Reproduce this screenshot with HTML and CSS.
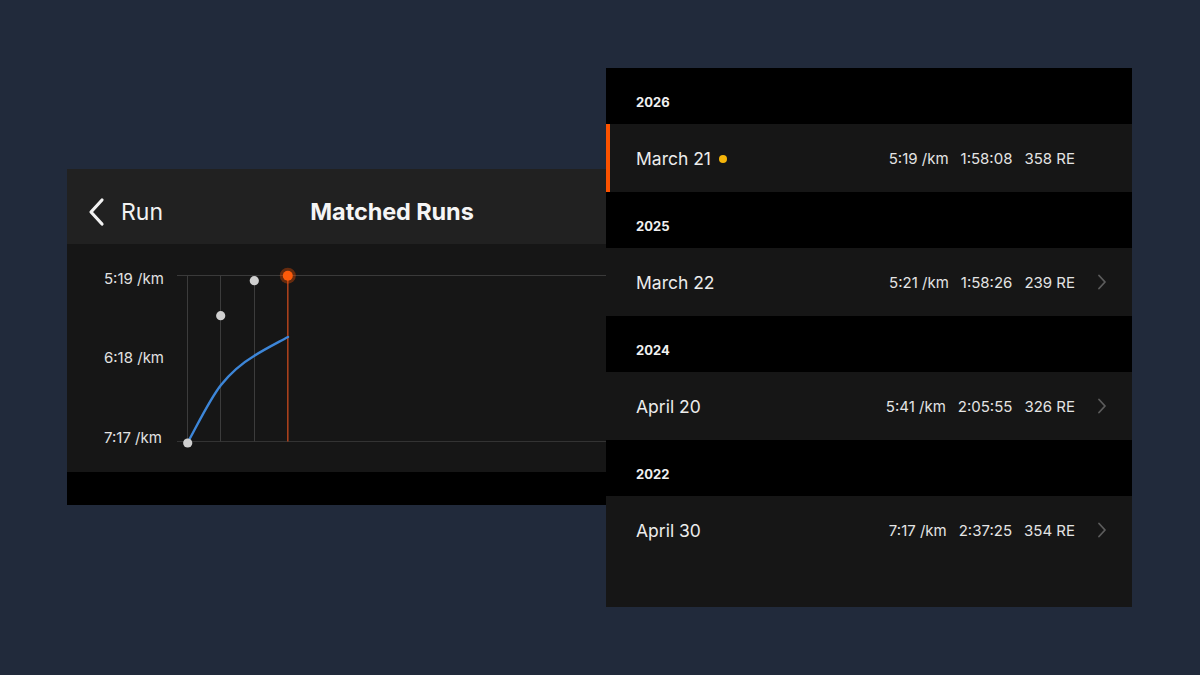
FILE: index.html
```html
<!DOCTYPE html>
<html>
<head>
    <meta charset="UTF-8">
    <meta name="viewport" content="width=device-width, initial-scale=1.0">
    <link rel="stylesheet" href="styles.css">
</head>
<body>
    <div class="stage">
        <!-- detail screen, sits behind the list -->
        <div class="run-card">
            <div class="run-header">
                <div class="back">
                    <svg class="back-icon" width="20" height="30" viewBox="0 0 20 30">
                        <polyline points="15,3 4,15 15,27" fill="none" stroke="#f2f2f2" stroke-width="3.2" stroke-linecap="round" stroke-linejoin="round"/>
                    </svg>
                    <span>Run</span>
                </div>
                <h1 class="title">Matched Runs</h1>
                <div></div>
            </div>
            <div class="chart">
                <svg width="650" height="228" viewBox="0 0 650 228">
                    <g class="axis-label">
                        <text x="37" y="40">5:19 /km</text>
                        <text x="37" y="119">6:18 /km</text>
                        <text x="37" y="199">7:17 /km</text>
                    </g>
                    <line x1="110" y1="31.5" x2="650" y2="31.5" stroke="#3a3a3a" stroke-width="1"/>
                    <line x1="110" y1="197.5" x2="650" y2="197.5" stroke="#333" stroke-width="1"/>
                    <line x1="120.5" y1="31.5" x2="120.5" y2="197.5" stroke="#3c3c3c" stroke-width="1"/>
                    <line x1="153.5" y1="31.5" x2="153.5" y2="197.5" stroke="#3c3c3c" stroke-width="1"/>
                    <line x1="187.5" y1="31.5" x2="187.5" y2="197.5" stroke="#3c3c3c" stroke-width="1"/>
                    <line x1="220.8" y1="31.5" x2="220.8" y2="197.5" stroke="#a8401c" stroke-width="1.6"/>
                    <path d="M121 198 C133 176 143 155 154 141 C166 126 177 118 187 112 C198 105 210 99 221 93" fill="none" stroke="#3d86d8" stroke-width="2.4" stroke-linecap="round"/>
                    <circle cx="120.7" cy="199" r="4.6" fill="#cfcfcf"/>
                    <circle cx="153.7" cy="71.7" r="4.6" fill="#cfcfcf"/>
                    <circle cx="187.3" cy="36.7" r="4.6" fill="#cfcfcf"/>
                    <circle cx="220.8" cy="31.7" r="8" fill="#fc5200" fill-opacity="0.35"/>
                    <circle cx="220.8" cy="31.7" r="5" fill="#fc5a0a"/>
                </svg>
            </div>
            <div class="run-footer"></div>
        </div>

        <!-- list of matched runs -->
        <div class="list-card">
            <div class="year">2026</div>
            <div class="row current">
                <div class="row-inner">
                    <span class="date">March 21</span>
                    <span class="dot"></span>
                    <div class="stats">
                        <span>5:19 /km</span>
                        <span>1:58:08</span>
                        <span>358 RE</span>
                    </div>
                    <svg class="chev hidden" width="10" height="16" viewBox="0 0 10 16"><polyline points="2,1.5 8,8 2,14.5" fill="none" stroke="#5c5c5c" stroke-width="1.8" stroke-linecap="round" stroke-linejoin="round"/></svg>
                </div>
            </div>
            <div class="year">2025</div>
            <div class="row">
                <div class="row-inner">
                    <span class="date">March 22</span>
                    <div class="stats">
                        <span>5:21 /km</span>
                        <span>1:58:26</span>
                        <span>239 RE</span>
                    </div>
                    <svg class="chev" width="10" height="16" viewBox="0 0 10 16"><polyline points="2,1.5 8,8 2,14.5" fill="none" stroke="#5c5c5c" stroke-width="1.8" stroke-linecap="round" stroke-linejoin="round"/></svg>
                </div>
            </div>
            <div class="year">2024</div>
            <div class="row">
                <div class="row-inner">
                    <span class="date">April 20</span>
                    <div class="stats">
                        <span>5:41 /km</span>
                        <span>2:05:55</span>
                        <span>326 RE</span>
                    </div>
                    <svg class="chev" width="10" height="16" viewBox="0 0 10 16"><polyline points="2,1.5 8,8 2,14.5" fill="none" stroke="#5c5c5c" stroke-width="1.8" stroke-linecap="round" stroke-linejoin="round"/></svg>
                </div>
            </div>
            <div class="year">2022</div>
            <div class="row">
                <div class="row-inner">
                    <span class="date">April 30</span>
                    <div class="stats">
                        <span>7:17 /km</span>
                        <span>2:37:25</span>
                        <span>354 RE</span>
                    </div>
                    <svg class="chev" width="10" height="16" viewBox="0 0 10 16"><polyline points="2,1.5 8,8 2,14.5" fill="none" stroke="#5c5c5c" stroke-width="1.8" stroke-linecap="round" stroke-linejoin="round"/></svg>
                </div>
            </div>
        </div>
    </div>
</body>
</html>
```

FILE: styles.css
```css
html, body {
    margin: 0;
    padding: 0;
}
body {
    background-color: #212a3b;
    font-family: "Inter", "Noto Sans", sans-serif;
    color: #ededed;
}
.stage {
    position: relative;
    width: 1200px;
    height: 675px;
    overflow: hidden;
}

/* 左侧卡片 */
.run-card {
    position: absolute;
    left: 67px;
    top: 169px;
    width: 650px;
    display: flex;
    flex-direction: column;
}
.run-header {
    height: 75px;
    box-sizing: border-box;
    padding-top: 10px;
    background-color: #212121;
    display: grid;
    grid-template-columns: 1fr auto 1fr;
    align-items: center;
}
.back {
    display: flex;
    align-items: center;
    gap: 14px;
    padding-left: 20px;
    font-size: 23px;
    color: #f2f2f2;
}
.back-icon {
    display: block;
}
.title {
    margin: 0;
    font-size: 23.5px;
    font-weight: 700;
    color: #f5f5f5;
    letter-spacing: -0.1px;
}
.chart {
    height: 228px;
    background-color: #161616;
}
.chart svg {
    display: block;
}
.axis-label text {
    font-family: "Inter", "Noto Sans", sans-serif;
    font-size: 15px;
    fill: #e2e2e2;
}
.run-footer {
    height: 33px;
    background-color: #000;
}

/* 右侧列表 */
.list-card {
    position: absolute;
    left: 606px;
    top: 68px;
    width: 526px;
    height: 539px;
    background-color: #000;
    display: flex;
    flex-direction: column;
}
.year {
    height: 56px;
    box-sizing: border-box;
    padding: 26px 30px 0;
    font-size: 13px;
    line-height: 16px;
    font-weight: 700;
    color: #f0f0f0;
}
.row {
    background-color: #161616;
}
.row:last-child {
    flex: 1;
}
.row.current {
    box-shadow: inset 4px 0 0 #fc5200;
}
.row-inner {
    height: 68px;
    display: flex;
    align-items: center;
    padding: 0 25px 0 30px;
}
.date {
    font-size: 17.5px;
    color: #ececec;
}
.dot {
    width: 8px;
    height: 8px;
    border-radius: 50%;
    background-color: #f5b50a;
    margin-left: 8px;
    margin-top: 1px;
}
.stats {
    margin-left: auto;
    display: flex;
    gap: 12px;
    font-size: 15px;
    color: #e4e4e4;
}
.chev {
    display: block;
    margin-left: 22px;
}
.chev.hidden {
    visibility: hidden;
}
```
